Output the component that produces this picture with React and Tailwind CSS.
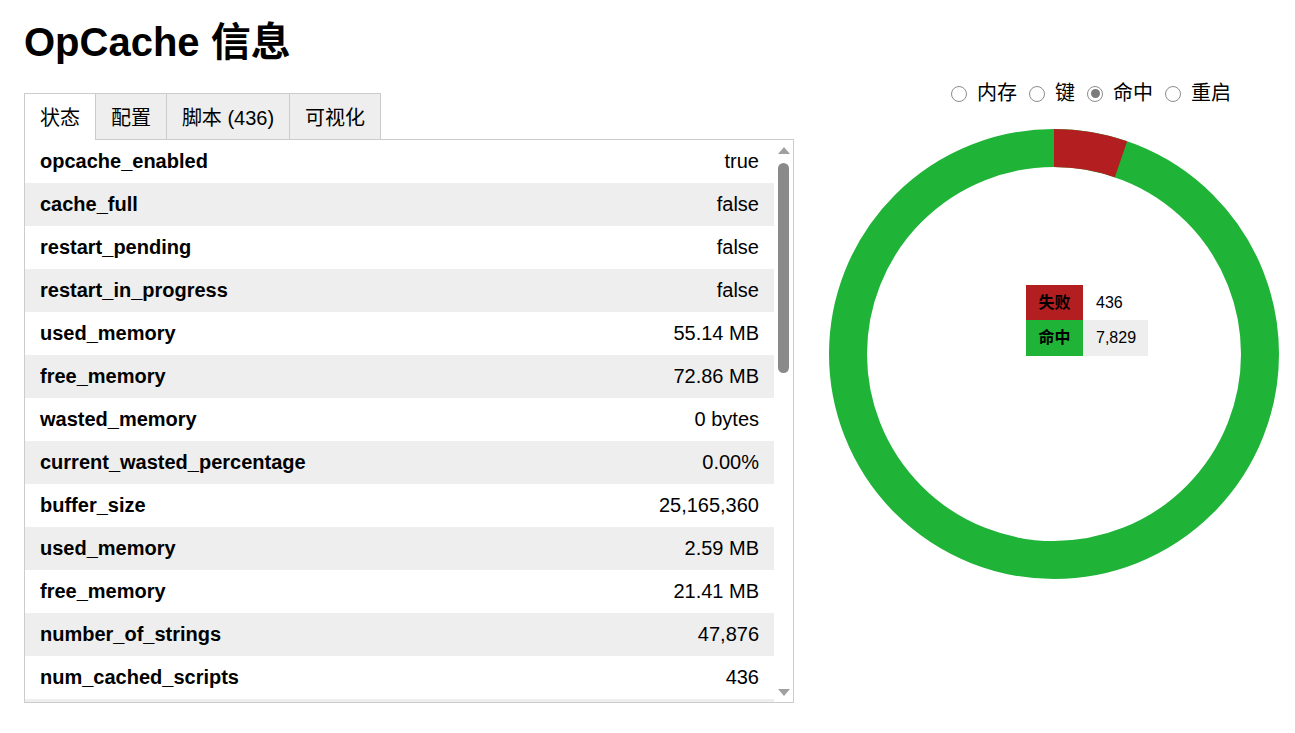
import React, { useState } from "react";

// status rows shown in the first tab
const rows = [
  ["opcache_enabled", "true"],
  ["cache_full", "false"],
  ["restart_pending", "false"],
  ["restart_in_progress", "false"],
  ["used_memory", "55.14 MB"],
  ["free_memory", "72.86 MB"],
  ["wasted_memory", "0 bytes"],
  ["current_wasted_percentage", "0.00%"],
  ["buffer_size", "25,165,360"],
  ["used_memory", "2.59 MB"],
  ["free_memory", "21.41 MB"],
  ["number_of_strings", "47,876"],
  ["num_cached_scripts", "436"],
  ["num_cached_keys", "812"],
];

const tabs = [
  { label: "状态", w: "w-[71px]" },
  { label: "配置", w: "w-[71px]" },
  { label: "脚本 (436)", w: "w-[123px]" },
  { label: "可视化", w: "w-[92px] border-r" },
];

const radios = ["内存", "键", "命中", "重启"];

const Donut = () => {
  const hits = 7829;
  const misses = 436;
  const r = 206;
  const c = 2 * Math.PI * r;
  const missLen = (misses / (hits + misses)) * c;
  return (
    <div className="relative w-[450px] h-[450px]">
      <svg width="450" height="450" viewBox="0 0 450 450">
        <circle cx="225" cy="225" r={r} fill="none" stroke="#1fb337" strokeWidth="38" />
        <circle
          cx="225"
          cy="225"
          r={r}
          fill="none"
          stroke="#b31f21"
          strokeWidth="38"
          strokeDasharray={`${missLen} ${c}`}
          transform="rotate(-90 225 225)"
        />
      </svg>
      {/* legend in the middle of the ring */}
      <table className="absolute left-[197px] top-[156px] text-[16px] border-collapse">
        <tbody>
          <tr className="h-[35px]">
            <td className="w-[57px] bg-[#b31f21] font-bold text-center p-0">失败</td>
            <td className="w-[65px] pl-[13px] p-0">436</td>
          </tr>
          <tr className="h-[36px]">
            <td className="w-[57px] bg-[#1fb337] font-bold text-center p-0">命中</td>
            <td className="w-[65px] pl-[13px] p-0 bg-[#eeeeee]">7,829</td>
          </tr>
        </tbody>
      </table>
    </div>
  );
};

const App = () => {
  const [tab, setTab] = useState(0);
  const [radio, setRadio] = useState(2);

  return (
    <div className="font-['Liberation_Sans','Noto_Sans_CJK_SC',sans-serif] text-[20px] text-black px-[24px] bg-white min-h-screen">
      <h1 className="text-[40px] font-bold leading-[46px] pt-[19px]">OpCache 信息</h1>

      <div className="flex items-start mt-[16px]">
        {/* left: tabs + table */}
        <div className="pt-[12px] w-[770px]">
          <div className="flex leading-[23px]">
            {tabs.map((t, i) => (
              <div
                key={t.label}
                onClick={() => setTab(i)}
                className={
                  i === tab
                    ? `${t.w} h-[47px] -mb-px pt-[3px] relative z-10 bg-white border-l border-t border-[#cccccc] flex items-center justify-center`
                    : `${t.w} h-[46px] pt-[3px] bg-[#eeeeee] border-l border-t border-[#cccccc] flex items-center justify-center cursor-pointer`
                }
              >
                {t.label}
              </div>
            ))}
          </div>
          <div className="border border-[#cccccc] h-[564px] flex">
            <div className="w-[749px] overflow-hidden leading-[23px]">
              {rows.map(([k, v], i) => (
                <div
                  key={i}
                  className={`h-[43px] flex items-center justify-between px-[15px] ${i % 2 ? "bg-[#eeeeee]" : "bg-white"}`}
                >
                  <span className="font-bold">{k}</span>
                  <span>{v}</span>
                </div>
              ))}
            </div>
            {/* scrollbar */}
            <div className="w-[19px] flex flex-col items-center bg-white">
              <div className="mt-[7px] w-0 h-0 border-l-[6px] border-r-[6px] border-b-[7px] border-l-transparent border-r-transparent border-b-[#a0a0a0]" />
              <div className="mt-[9px] w-[11px] h-[210px] rounded-full bg-[#8a8a8a]" />
              <div className="flex-1" />
              <div className="mb-[6px] w-0 h-0 border-l-[6px] border-r-[6px] border-t-[7px] border-l-transparent border-r-transparent border-t-[#a0a0a0]" />
            </div>
          </div>
        </div>

        {/* right: radios + chart */}
        <div className="ml-[35px] w-[450px]">
          <div className="flex items-center h-[23px] mt-[1px] pl-[122px] leading-[23px]">
            {radios.map((r, i) => (
              <label
                key={r}
                onClick={() => setRadio(i)}
                className="flex items-center mr-[12px] cursor-pointer"
              >
                <span className="w-[16px] h-[16px] rounded-full border border-[#8d8d8d] flex items-center justify-center">
                  {radio === i && <span className="w-[9px] h-[9px] rounded-full bg-[#7b7b7b]" />}
                </span>
                <span className="ml-[10px]">{r}</span>
              </label>
            ))}
          </div>
          <div className="mt-[24px]">
            <Donut />
          </div>
        </div>
      </div>
    </div>
  );
};

export default App;
